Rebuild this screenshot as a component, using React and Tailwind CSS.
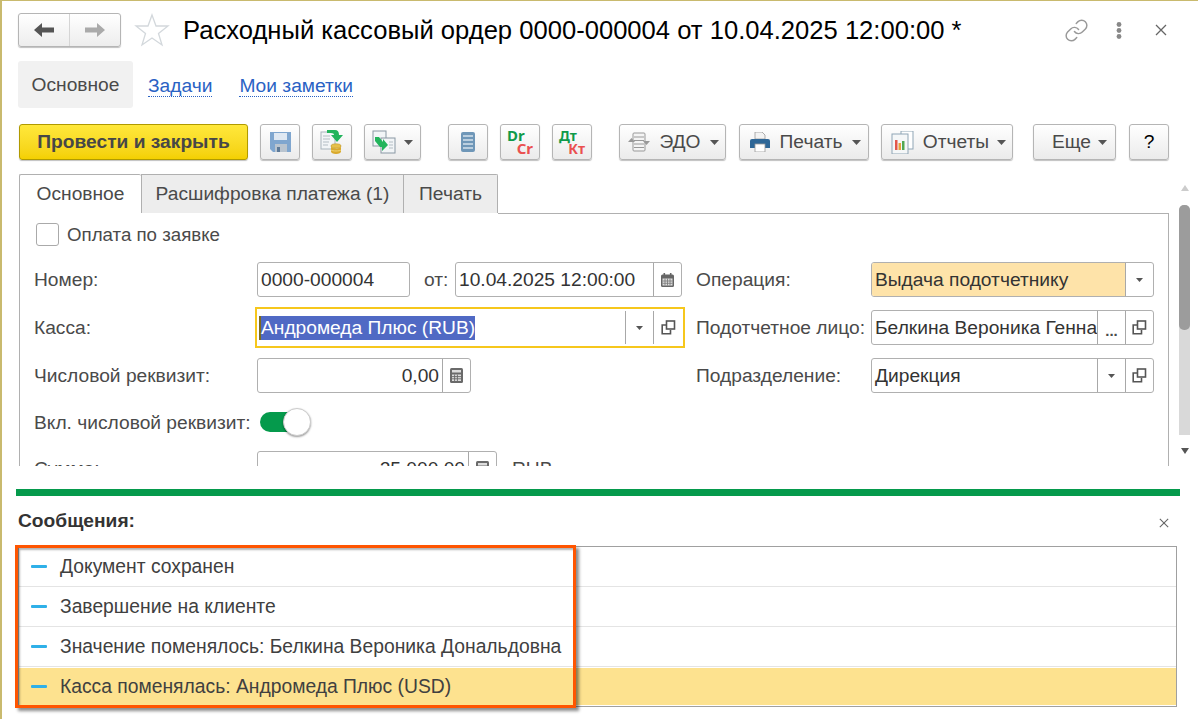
import React from "react";
import { Link } from "lucide-react";

const Caret = ({ small = false }) => (
  <svg width={small ? 7 : 9} height={small ? 4 : 5} viewBox="0 0 9 5">
    <path d="M0 0H9L4.5 5Z" fill="#555" />
  </svg>
);

const Close = ({ size = 12 }) => (
  <svg width={size} height={size} viewBox="0 0 12 12">
    <path d="M1 1L11 11M11 1L1 11" stroke="#666" strokeWidth="1.3" />
  </svg>
);

const OpenIcon = () => (
  <svg width="15" height="15" viewBox="0 0 15 15" fill="none" stroke="#555" strokeWidth="1.6">
    <rect x="5.5" y="1" width="8" height="8" />
    <path d="M5 5H1.2V13.8H9.5V10" />
  </svg>
);

const CalendarIcon = () => (
  <svg width="13" height="14" viewBox="0 0 13 14">
    <rect x="0" y="1.5" width="13" height="12.5" rx="1.5" fill="#666" />
    <rect x="2.5" y="0" width="1.6" height="3" fill="#666" />
    <rect x="8.9" y="0" width="1.6" height="3" fill="#666" />
    <path d="M1.5 5.5H11.5V12.5H1.5Z" fill="#ddd" />
    <path d="M1.5 8H11.5M1.5 10.3H11.5M4 5.5V12.5M6.5 5.5V12.5M9 5.5V12.5" stroke="#777" strokeWidth="0.8" />
  </svg>
);

const CalcIcon = () => (
  <svg width="13" height="15" viewBox="0 0 13 15">
    <rect width="13" height="15" rx="1.5" fill="#6a6a6a" />
    <rect x="2" y="2" width="9" height="2.5" fill="#ddd" />
    <path d="M2 6.5H11V13H2Z" fill="#ddd" />
    <path d="M2 8.6H11M2 10.8H11M4.6 6.5V13M7.4 6.5V13" stroke="#666" strokeWidth="0.9" />
  </svg>
);

const SaveIcon = () => (
  <svg width="21" height="20" viewBox="0 0 21 20">
    <path d="M0 0H21V20H3L0 17Z" fill="#7fa6cf" />
    <rect x="4" y="1" width="13" height="7" fill="#dfe8f2" />
    <rect x="5" y="12" width="12" height="8" fill="#b9c4cf" />
    <rect x="7" y="15" width="3" height="5" fill="#5d7a99" />
  </svg>
);

const PostIcon = () => (
  <svg width="24" height="24" viewBox="0 0 24 24">
    <rect x="1" y="2" width="14" height="17" fill="#f2f5f7" stroke="#a8b4bc" />
    <path d="M3 6H10M3 9H10M3 12H9M3 15H8" stroke="#b3bdc4" />
    <path d="M7 0H15Q19 0 19 5H23L17 12L11 5H14Q14 3 11 3H7Z" fill="#22b45c" />
    <ellipse cx="16" cy="16" rx="5" ry="2.2" fill="#e6c04a" stroke="#b08a20" strokeWidth="0.5" />
    <path d="M11 16V21.5C11 23 13 24 16 24S21 23 21 21.5V16C21 17.5 19 18.5 16 18.5S11 17.5 11 16Z" fill="#d9a92c" />
    <path d="M11 20C12 21.3 20 21.3 21 20" stroke="#f1d777" fill="none" />
  </svg>
);

const SwapIcon = () => (
  <svg width="24" height="24" viewBox="0 0 24 24">
    <rect x="1" y="1" width="13" height="15" fill="#f2f5f7" stroke="#8a98a4" />
    <rect x="9" y="8" width="14" height="15" fill="#f2f5f7" stroke="#8a98a4" />
    <path d="M17 12H21M17 15H21M17 18H21" stroke="#b3bdc4" />
    <path d="M3 7H7L11 12V9L16 15L10 21V17H8L3 11Z" fill="#22b45c" />
  </svg>
);

const ListIcon = () => (
  <svg width="14" height="20" viewBox="0 0 14 20">
    <rect width="14" height="20" rx="2" fill="#6f97b8" />
    <path d="M2 4H12M2 8H12M2 12H12M2 16H12" stroke="#d5e2ec" strokeWidth="1.6" />
  </svg>
);

const EdoIcon = () => (
  <svg width="22" height="20" viewBox="0 0 22 20" fill="none">
    <rect x="5" y="1" width="12" height="18" rx="1" fill="#f4f4f4" stroke="#999" />
    <path d="M6 5H16M6 8.5H16M6 12H16M6 15.5H16" stroke="#999" strokeWidth="1.2" />
    <path d="M0 10L3.5 6L7 10Z" fill="#999" />
    <path d="M15 9L18.5 13L22 9Z" fill="#999" />
  </svg>
);

const PrintIcon = () => (
  <svg width="20" height="20" viewBox="0 0 20 20">
    <path d="M5 0H12L15 3V7H5Z" fill="#f3f3f3" stroke="#999" strokeWidth="0.8" />
    <path d="M2 7H18Q20 7 20 9V16H0V9Q0 7 2 7Z" fill="#2f6797" />
    <rect x="5" y="12" width="10" height="8" fill="#fff" stroke="#999" strokeWidth="0.8" />
  </svg>
);

const ReportIcon = () => (
  <svg width="24" height="23" viewBox="0 0 24 23">
    <rect x="10" y="0" width="12" height="18" fill="#fff" stroke="#8fa5b5" />
    <rect x="1" y="3" width="16" height="20" fill="#f5f7f8" stroke="#8fa5b5" />
    <rect x="4" y="9" width="2.5" height="10" fill="#e2574c" />
    <rect x="7.5" y="12" width="2.5" height="7" fill="#e8a33d" />
    <rect x="11" y="10" width="2.5" height="9" fill="#52a852" />
  </svg>
);

const Btn = ({ className = "", children }) => (
  <button className={`h-9 flex items-center justify-center shrink-0 rounded-[3px] border border-[#b5b5b5] bg-linear-to-b from-white to-[#ebebeb] shadow-[0_1px_1px_rgba(0,0,0,0.25)] text-[#4a4a4a] ${className}`}>
    {children}
  </button>
);

// поле ввода с кнопками справа
const Field = ({ className = "", text, fill = "", right = false, buttons = [] }) => (
  <div className={`h-[35px] flex rounded-[3px] border border-[#b0b0b0] overflow-hidden ${className}`}>
    <div className={`flex-1 min-w-0 flex items-center overflow-hidden whitespace-nowrap text-[#333] px-[3px] pt-[1px] ${right ? "justify-end" : ""} ${fill}`}>
      {text}
    </div>
    {buttons.map((b, i) => (
      <div key={i} className="w-7 flex items-center justify-center shrink-0 border-l border-[#a8a8a8]">{b}</div>
    ))}
  </div>
);

const Msg = ({ text, active, last }) => (
  <div className={`h-10 ${last ? "" : "border-b border-[#e4e4e4]"}`}>
    <div className={`flex items-center pl-[12px] ${active ? "h-[37px] mt-[1px] bg-[#fde28f]" : "h-full"}`}>
      <div className="w-4 h-[3px] bg-[#2fb0e8] rounded-[1px] mr-[13px] shrink-0" />
      <span className="text-[#404040] text-[19.3px] pt-[2px]">{text}</span>
    </div>
  </div>
);

export default function App() {
  return (
    <div className="relative w-[1198px] h-[719px] overflow-hidden bg-white border-l-2 border-t border-[#c9ba6e] pl-[16px] text-[19.2px] text-[#4a4a4a] font-['Liberation_Sans',Arial,sans-serif]">
      {/* Заголовок */}
      <header className="mt-3 h-[34px] flex items-center">
        <div className="w-[103px] h-[34px] flex rounded-[3px] border border-[#b5b5b5] bg-linear-to-b from-white to-[#ededed] shadow-[0_1px_1px_rgba(0,0,0,0.25)]">
          <div className="flex-1 flex items-center justify-center border-r border-[#d5d5d5]">
            <svg width="20" height="14" viewBox="0 0 20 14"><path d="M0 7L8 0V4.5H20V9.5H8V14Z" fill="#555" /></svg>
          </div>
          <div className="flex-1 flex items-center justify-center">
            <svg width="20" height="14" viewBox="0 0 20 14"><path d="M20 7L12 0V4.5H0V9.5H12V14Z" fill="#aaa" /></svg>
          </div>
        </div>
        <svg width="36" height="34" viewBox="0 0 36 34" className="ml-[13px]">
          <path d="M18 2L22 13H34L24.5 20.5L28 32L18 25L8 32L11.5 20.5L2 13H14Z" fill="#fff" stroke="#d3d8dc" strokeWidth="1.3" />
        </svg>
        <h1 className="ml-[13px] text-[25.6px] text-black whitespace-nowrap">Расходный кассовый ордер 0000-000004 от 10.04.2025 12:00:00 *</h1>
        <div className="ml-auto flex items-center mr-[31px]">
          <Link size={25} strokeWidth={1.4} className="text-[#999]" />
          <svg width="6" height="17" viewBox="0 0 6 17" className="ml-[27px]">
            <circle cx="3" cy="2.5" r="2.4" fill="#888" /><circle cx="3" cy="8.5" r="2.4" fill="#888" /><circle cx="3" cy="14.5" r="2.4" fill="#888" />
          </svg>
          <div className="ml-[33px]"><Close /></div>
        </div>
      </header>

      {/* Вкладки формы */}
      <nav className="mt-[14px] h-[47px] flex items-center">
        <div className="h-full w-[115px] flex items-center justify-center rounded-[3px] bg-[#f1f1f1] pt-[1px]">Основное</div>
        <a className="ml-[15px] mt-[3px] text-[#2a62c4] border-b border-dotted border-[#2a62c4] leading-[20px]">Задачи</a>
        <a className="ml-[27px] mt-[3px] text-[#2a62c4] border-b border-dotted border-[#2a62c4] leading-[20px]">Мои заметки</a>
      </nav>

      {/* Командная панель */}
      <div className="mt-4 flex items-center pl-[1px]">
        <button className="w-[229px] h-9 rounded-[3px] border border-[#b09a00] bg-linear-to-b from-[#ffe83a] to-[#f4d000] font-bold text-[#474747] shadow-[0_1px_1px_rgba(0,0,0,0.25)]">Провести и закрыть</button>
        <Btn className="w-10 ml-3"><SaveIcon /></Btn>
        <Btn className="w-10 ml-3"><PostIcon /></Btn>
        <Btn className="w-[57px] ml-3 gap-2"><SwapIcon /><Caret /></Btn>
        <Btn className="w-10 ml-[27px]"><ListIcon /></Btn>
        <Btn className="w-10 ml-3">
          <div className="w-[26px] flex flex-col font-['Noto_Sans',sans-serif] font-bold text-[15px] leading-[13px]">
            <span className="text-[#0f9a4a] self-start">Dr</span>
            <span className="text-[#ea5050] self-end">Cr</span>
          </div>
        </Btn>
        <Btn className="w-10 ml-3">
          <div className="w-[26px] flex flex-col font-['Noto_Sans',sans-serif] font-bold text-[14px] leading-[13px]">
            <span className="text-[#0f9a4a] self-start">Дт</span>
            <span className="text-[#ea5050] self-end">Кт</span>
          </div>
        </Btn>
        <Btn className="w-[107px] ml-[27px] gap-[9px] pl-[2px]"><EdoIcon /><span>ЭДО</span><Caret /></Btn>
        <Btn className="w-[130px] ml-[13px] gap-[10px] pl-[3px]"><PrintIcon /><span>Печать</span><Caret /></Btn>
        <Btn className="w-[132px] ml-3 gap-[8px] pl-[3px]"><ReportIcon /><span>Отчеты</span><Caret /></Btn>
        <Btn className="w-[83px] ml-5 gap-[7px] pl-[10px]"><span>Еще</span><Caret /></Btn>
        <Btn className="w-10 ml-[13px] text-black">?</Btn>
      </div>

      {/* Основная область */}
      <div className="mt-[14px] h-[292px] flex overflow-hidden pl-[1px]">
        <div className="w-[1150px] flex flex-col shrink-0">
          <div className="flex h-[40px] shrink-0">
            <div className="w-[122px] h-[40px] flex items-center justify-center bg-white border-l border-t border-[#b0b0b0] rounded-t-[2px]">Основное</div>
            <div className="w-[262px] h-[39px] flex items-center justify-center bg-[#ededed] border-l border-t border-[#b0b0b0]">Расшифровка платежа (1)</div>
            <div className="w-[95px] h-[39px] flex items-center justify-center bg-[#ededed] border-x border-t border-[#b0b0b0] rounded-tr-[2px]">Печать</div>
            <div className="flex-1 h-[40px] border-b border-[#b0b0b0]" />
          </div>
          <div className="flex-1 border-x border-[#b0b0b0] pl-[14px]">
            <div className="h-[48px] pt-[9px] flex items-start">
              <div className="flex items-center">
                <div className="w-[23px] h-[23px] ml-[2px] rounded-[3px] border border-[#aaa]" />
                <span className="ml-[8px] leading-[23px] text-[18.7px]">Оплата по заявке</span>
              </div>
            </div>
            <div className="flex">
              <div className="w-[662px] shrink-0 flex flex-col">
                <div className="h-[48px] flex items-start">
                  <span className="w-[223px] leading-[35px]">Номер:</span>
                  <Field className="w-[153px]" text="0000-000004" />
                  <span className="ml-[14px] w-[31px] leading-[35px]">от:</span>
                  <Field className="w-[227px]" text="10.04.2025 12:00:00" buttons={[<CalendarIcon key="c" />]} />
                </div>
                <div className="h-[48px] flex items-start">
                  <span className="w-[221px] leading-[35px]">Касса:</span>
                  <div className="w-[430px] h-[41px] -mt-[3px] flex border-2 border-[#f6c71c]">
                    <div className="flex-1 flex items-center pl-[4px]">
                      <span className="bg-[#5069c4] text-white h-6 leading-6 border-l-2 border-[#7a6a20] -ml-[2px] whitespace-nowrap">Андромеда Плюс (RUB)</span>
                    </div>
                    <div className="w-7 my-[2px] flex items-center justify-center border-l border-[#a8a8a8]"><Caret small /></div>
                    <div className="w-[30px] my-[2px] flex items-center justify-center border-l border-[#a8a8a8]"><OpenIcon /></div>
                  </div>
                </div>
                <div className="h-[48px] flex items-start">
                  <span className="w-[223px] leading-[35px]">Числовой реквизит:</span>
                  <Field className="w-[214px]" text="0,00" right buttons={[<CalcIcon key="c" />]} />
                </div>
                <div className="h-[45px] flex items-start">
                  <span className="w-[226px] leading-[34px]">Вкл. числовой реквизит:</span>
                  <div className="relative w-[51px] h-[20px] mt-[6px]">
                    <div className="w-[31px] h-[20px] rounded-l-[10px] bg-[#059a4c]" />
                    <div className="absolute left-[23px] -top-[4px] w-[28px] h-[28px] rounded-full bg-white border border-[#ccc] shadow-[0_1px_2px_rgba(0,0,0,0.4)]" />
                  </div>
                </div>
                <div className="h-[35px] flex items-start">
                  <span className="w-[223px] leading-[35px]">Сумма:</span>
                  <Field className="w-[240px]" text="25 000,00" right buttons={[<CalcIcon key="c" />]} />
                  <span className="ml-[15px] leading-[35px]">RUB</span>
                </div>
              </div>
              <div className="flex flex-col">
                <div className="h-[48px] flex items-start">
                  <span className="w-[175px] leading-[35px]">Операция:</span>
                  <Field className="w-[283px]" text="Выдача подотчетнику" fill="bg-[#fee3a9]" buttons={[<Caret small key="c" />]} />
                </div>
                <div className="h-[48px] flex items-start">
                  <span className="w-[175px] leading-[35px] whitespace-nowrap">Подотчетное лицо:</span>
                  <Field className="w-[283px]" text="Белкина Вероника Генна" buttons={[<span key="d" className="text-[15px] font-bold leading-none mt-[5px]">...</span>, <OpenIcon key="o" />]} />
                </div>
                <div className="h-[48px] flex items-start">
                  <span className="w-[175px] leading-[35px]">Подразделение:</span>
                  <Field className="w-[283px]" text="Дирекция" buttons={[<Caret small key="c" />, <OpenIcon key="o" />]} />
                </div>
              </div>
            </div>
          </div>
        </div>
        {/* Полоса прокрутки */}
        <div className="ml-[10px] w-[11px] flex flex-col items-center pt-[11px]">
          <svg width="8" height="6" viewBox="0 0 8 6"><path d="M4 0L8 6H0Z" fill="#ccc" /></svg>
          <div className="mt-[14px] w-[11px] h-[230px] rounded-t-[5px] bg-[#d9d9d9]">
            <div className="h-[125px] rounded-[5px] bg-[#9c9c9c]" />
          </div>
          <svg width="8" height="6" viewBox="0 0 8 6" className="mt-[13px]"><path d="M4 6L8 0H0Z" fill="#555" /></svg>
        </div>
      </div>

      <div className="mt-[23px] w-[1164px] -ml-[2px] h-[7px] bg-[#059a4c]" />

      {/* Сообщения */}
      <div className="h-[51px] w-[1159px] flex items-center justify-between">
        <span className="font-bold text-[#333] -mt-[1px]">Сообщения:</span>
        <div className="mr-[8px] mt-[3px]"><Close size={10} /></div>
      </div>
      <div className="w-[1159px] h-[161px] border border-[#a0a0a0] -mt-[1px]">
        <Msg text="Документ сохранен" />
        <Msg text="Завершение на клиенте" />
        <Msg text="Значение поменялось: Белкина Вероника Дональдовна" />
        <Msg text="Касса поменялась: Андромеда Плюс (USD)" active last />
      </div>

      {/* Рамка-выделение поверх списка */}
      <div className="absolute left-[13px] top-[544px] w-[561px] h-[163px] border-[3px] border-[#ff5500] shadow-[3px_3px_3px_rgba(0,0,0,0.45),inset_2px_2px_2px_rgba(0,0,0,0.3)]" />
    </div>
  );
}
